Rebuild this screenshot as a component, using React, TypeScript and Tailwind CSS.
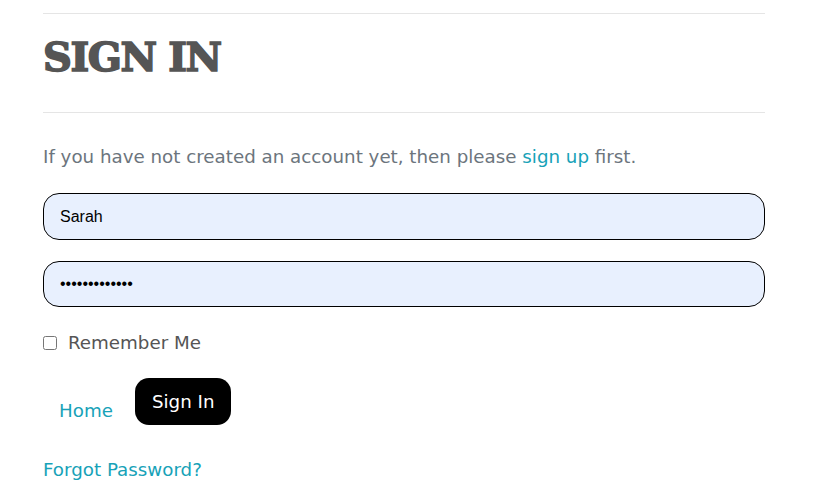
export default function App() {
  return (
    <div className="min-h-[502px] bg-white px-[43px] pt-[13px] font-['DejaVu_Sans',sans-serif]">
      <div className="w-[722px]">
        <hr className="border-t border-[#e5e5e5]" />
        <h1 className="pt-[19px] pb-[31px] text-[40px] leading-[48px] font-black tracking-[-1.4px] text-[#555555] font-['DejaVu_Serif',serif] [-webkit-text-stroke:1.6px_#555555]">
          SIGN IN
        </h1>
        <hr className="border-t border-[#e5e5e5]" />
        <p className="mt-[31px] text-[18.25px] leading-[26px] text-[#6c757d]">
          If you have not created an account yet, then please{" "}
          <a className="text-[#17a2b8]">sign up</a> first.
        </p>
        <form className="mt-[23px] flex flex-col">
          <input
            readOnly
            value="Sarah"
            className="h-[47px] w-full rounded-[16px] border border-black bg-[#e8f0fe] px-[16px] text-[16px] text-black font-['Liberation_Sans',sans-serif] outline-none"
          />
          <input
            readOnly
            type="password"
            value="sarahpass1234"
            className="mt-[21px] h-[46px] w-full rounded-[16px] border border-black bg-[#e8f0fe] px-[16px] text-[16px] text-black font-['Liberation_Sans',sans-serif] outline-none"
          />
          <label className="mt-[24px] flex items-center gap-[11px] text-[18.25px] leading-[24px] text-[#555555]">
            <input type="checkbox" className="h-[14px] w-[14px]" />
            Remember Me
          </label>
          <div className="mt-[23px] flex items-start gap-[22px]">
            <a className="ml-[16px] mt-[20px] text-[18.25px] leading-[26px] text-[#17a2b8]">Home</a>
            <button
              type="button"
              className="h-[47px] rounded-[14px] bg-black px-[17px] text-[18.25px] text-white"
            >
              Sign In
            </button>
          </div>
          <a className="mt-[32px] text-[18.25px] leading-[26px] text-[#17a2b8]">Forgot Password?</a>
        </form>
      </div>
    </div>
  );
}
